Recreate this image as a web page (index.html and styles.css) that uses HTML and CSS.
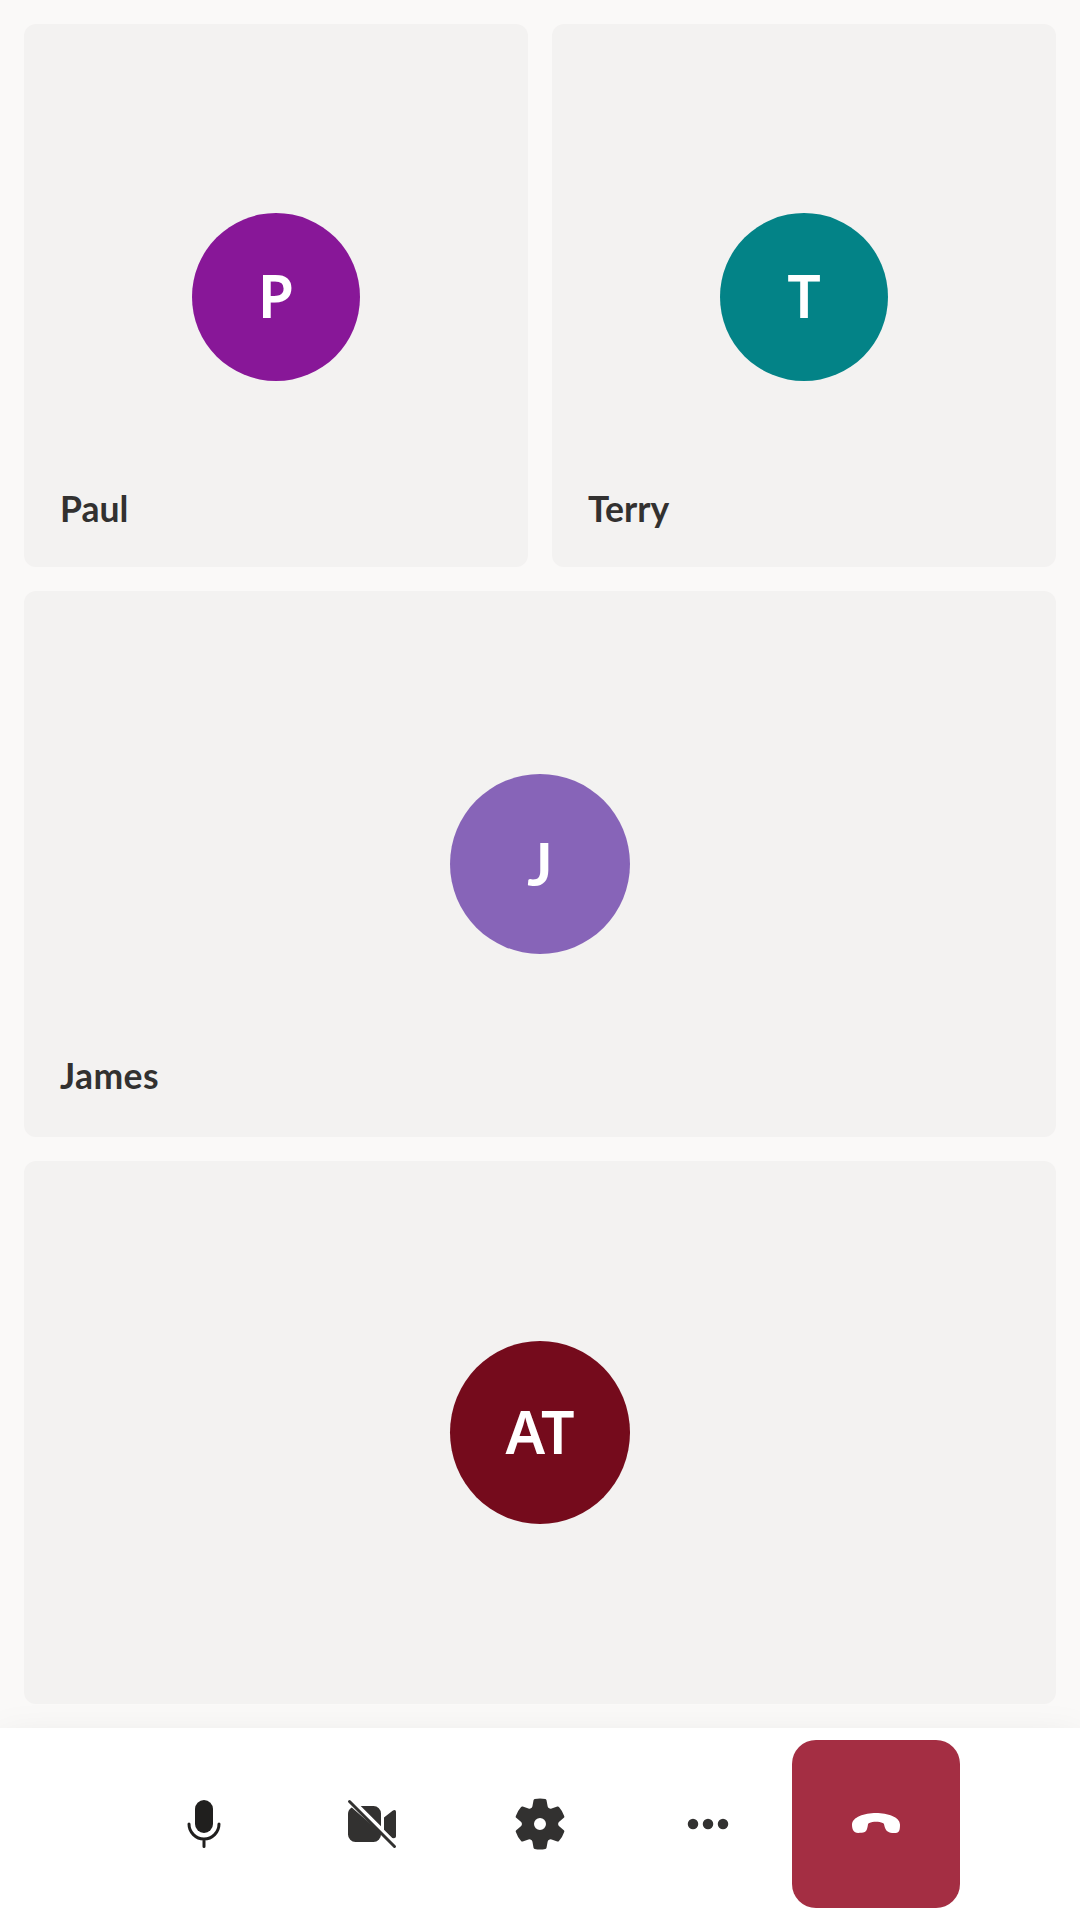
FILE: index.html
```html
<!DOCTYPE html>
<html lang="en">
<head>
<meta charset="utf-8">
<title>Call</title>
<link rel="stylesheet" href="styles.css">
</head>
<body>
<main class="gallery">
  <section class="tile">
    <div class="avatar avatar-paul"><span>P</span></div>
    <div class="name name-paul">Paul</div>
  </section>
  <section class="tile">
    <div class="avatar avatar-terry"><span>T</span></div>
    <div class="name name-terry">Terry</div>
  </section>
  <section class="tile wide">
    <div class="avatar large avatar-james"><span>J</span></div>
    <div class="name name-james">James</div>
  </section>
  <section class="tile wide">
    <div class="avatar large avatar-at"><span>AT</span></div>
  </section>
</main>
<nav class="controls">
  <button class="control mic" aria-label="Microphone">
    <svg viewBox="0 0 60 60"><rect x="21" y="6" width="18" height="33" rx="9" fill="currentColor"/><path d="M15 30a15 15 0 0 0 30 0M30 45v7.5" fill="none" stroke="currentColor" stroke-width="3" stroke-linecap="round"/></svg>
  </button>
  <button class="control" aria-label="Camera">
    <svg viewBox="0 0 60 60" fill="currentColor"><path d="M9.8 13.4A7.5 7.5 0 0 0 6 20v20.500a7.500 7.500 0 0 0 7.500 7.500h18a7.500 7.500 0 0 0 7.500-7.500V39ZM18.700 12H31.500a7.500 7.500 0 0 1 7.500 7.500v12.800ZM42 23.600l8.600-6.900Q51.600 16 52.600 16 54 16.200 54 17.700v24.600q0 1.500-1.400 1.800-1 .1-2.300-.1L42 35.700Z"/><path d="m7.500 7.500 45 45" stroke="currentColor" stroke-width="3" stroke-linecap="round"/></svg>
  </button>
  <button class="control" aria-label="Settings">
    <svg viewBox="0 0 20 20" fill="currentColor"><path d="M1.910 7.380A8.500 8.500 0 0 1 3.700 4.300a.5.5 0 0 1 .54-.13l1.920.68a1 1 0 0 0 1.320-.76l.36-2a.5.5 0 0 1 .4-.4 8.530 8.530 0 0 1 3.550 0c.2.04.35.2.38.4l.37 2a1 1 0 0 0 1.320.76l1.920-.68a.5.5 0 0 1 .54.13 8.500 8.500 0 0 1 1.780 3.080c.06.2 0 .4-.15.54l-1.560 1.320a1 1 0 0 0 0 1.520l1.560 1.320a.5.5 0 0 1 .15.54 8.500 8.500 0 0 1-1.780 3.080.5.5 0 0 1-.54.13l-1.920-.68a1 1 0 0 0-1.320.76l-.37 2a.5.5 0 0 1-.38.4 8.530 8.530 0 0 1-3.560 0 .5.5 0 0 1-.39-.4l-.36-2a1 1 0 0 0-1.320-.76l-1.920.68a.5.5 0 0 1-.54-.13 8.500 8.500 0 0 1-1.780-3.080.5.5 0 0 1 .15-.54l1.560-1.320a1 1 0 0 0 0-1.520L2.060 7.920a.5.5 0 0 1-.15-.54ZM8 10a2 2 0 1 0 4 0 2 2 0 0 0-4 0Z"/></svg>
  </button>
  <button class="control" aria-label="More options">
    <svg viewBox="0 0 60 60" fill="currentColor"><circle cx="15" cy="30" r="5.250"/><circle cx="30" cy="30" r="5.250"/><circle cx="45" cy="30" r="5.250"/></svg>
  </button>
  <button class="control hang-up" aria-label="Leave call">
    <svg viewBox="0 0 60 60" fill="currentColor"><path d="M30 19C41.500 19 54 23 54 30.500c0 4.500-.4 8.500-4.200 8.500-2.500 0-5-.1-6.800-.8-3.400-1.300-4.200-4.600-4.800-7.200-.3-1.300-.4-1.600-1.500-2.100C34.900 28.100 32.500 27.700 30 27.700s-4.900.4-6.700 1.200c-1 .4-1.200.8-1.400 2.100-.4 2.800-1.100 5.900-3.200 7.100-1.700.7-4.200.9-6.500.9C7.500 39 6 35 6 30.800 6 23 18.500 19 30 19Z"/></svg>
  </button>
</nav>
</body>
</html>
```

FILE: styles.css
```css
* {
  box-sizing: border-box;
}

body {
  margin: 0;
  height: 1920px;
  display: flex;
  flex-direction: column;
  overflow: hidden;
  background: #faf9f8;
  color: #323130;
  font-family: "Noto Sans", "Open Sans", sans-serif;
  font-weight: 600;
}

.gallery {
  height: 1728px;
  padding: 24px;
  display: grid;
  grid-template-columns: 1fr 1fr;
  grid-template-rows: 543px 546px 543px;
  gap: 24px;
}

.tile {
  display: grid;
  grid-template: 1fr / 1fr;
  border-radius: 12px;
  background: #f3f2f1;
}

.wide {
  grid-column: span 2;
}

.avatar {
  grid-area: 1 / 1;
  place-self: center;
  width: 168px;
  height: 168px;
  margin-top: 3px;
  padding-bottom: 4px;
  border-radius: 50%;
  display: flex;
  align-items: center;
  justify-content: center;
  color: #fff;
  font-size: 59px;
  line-height: 80px;
}

.large {
  width: 180px;
  height: 180px;
  margin-top: 0;
}

.avatar-paul {
  background: #881798;
}

.avatar-terry {
  background: #038387;
}

.avatar-james {
  padding-bottom: 1px;
  background: #8764b8;
  font-family: Lato, sans-serif;
  font-weight: 700;
}

.avatar-at {
  height: 183px;
  background: #750b1c;
}

.name {
  grid-area: 1 / 1;
  place-self: end start;
  padding: 0 0 34px 36px;
  font-family: Lato, sans-serif;
  font-size: 35.5px;
  font-weight: 700;
  line-height: 48px;
}

.name-james {
  padding-bottom: 37px;
  letter-spacing: 0.4px;
}

.controls {
  height: 192px;
  display: flex;
  align-items: center;
  justify-content: center;
  background: #fff;
  box-shadow: 0 19px 43px rgba(0, 0, 0, 0.13);
}

.control {
  width: 168px;
  height: 168px;
  padding: 0;
  border: 0;
  border-radius: 24px;
  display: flex;
  align-items: center;
  justify-content: center;
  background: transparent;
  color: #323130;
}

.control svg {
  width: 60px;
  height: 60px;
}

.mic {
  color: #201f1e;
}

.hang-up {
  background: #a42e43;
  color: #fff;
}
```
